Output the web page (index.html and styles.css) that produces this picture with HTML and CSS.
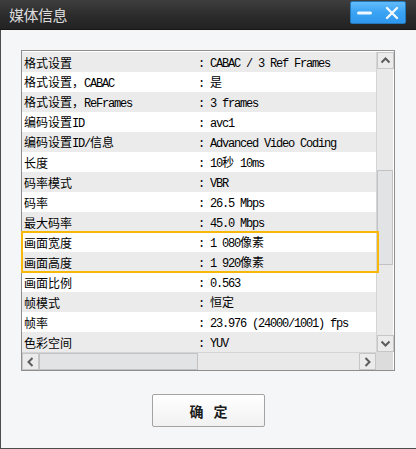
FILE: index.html
```html
<!DOCTYPE html>
<html lang="zh-CN">
<head>
  <meta charset="UTF-8">
  <title>媒体信息</title>
  <link rel="stylesheet" href="styles.css">
</head>
<body>
  <div class="window">
    <div class="titlebar">
      <span class="title">媒体信息</span>
      <div class="controls">
        <svg width="54" height="22" viewBox="0 0 54 22">
          <line x1="7.5" y1="11" x2="19.5" y2="11" stroke="#f2f8ff" stroke-width="3" stroke-linecap="round"/>
          <path d="M36 6 L46 16 M46 6 L36 16" stroke="#f2f8ff" stroke-width="2.4" stroke-linecap="round"/>
        </svg>
      </div>
    </div>

    <div class="content">
      <div class="list">
        <div class="rows">
          <div class="row alt"><span class="key">格式设置</span><span class="val"><span class="en">: CABAC / 3 Ref Frames</span></span></div>
          <div class="row"><span class="key">格式设置，<span class="en">CABAC</span></span><span class="val"><span class="en">: </span>是</span></div>
          <div class="row alt"><span class="key">格式设置，<span class="en">ReFrames</span></span><span class="val"><span class="en">: 3 frames</span></span></div>
          <div class="row"><span class="key">编码设置<span class="en">ID</span></span><span class="val"><span class="en">: avc1</span></span></div>
          <div class="row alt"><span class="key">编码设置<span class="en">ID/</span>信息</span><span class="val"><span class="en">: Advanced Video Coding</span></span></div>
          <div class="row"><span class="key">长度</span><span class="val"><span class="en">: 10</span>秒<span class="en"> 10ms</span></span></div>
          <div class="row alt"><span class="key">码率模式</span><span class="val"><span class="en">: VBR</span></span></div>
          <div class="row"><span class="key">码率</span><span class="val"><span class="en">: 26.5 Mbps</span></span></div>
          <div class="row alt"><span class="key">最大码率</span><span class="val"><span class="en">: 45.0 Mbps</span></span></div>
          <div class="hl">
            <div class="row"><span class="key">画面宽度</span><span class="val"><span class="en">: 1 080</span>像素</span></div>
            <div class="row alt"><span class="key">画面高度</span><span class="val"><span class="en">: 1 920</span>像素</span></div>
          </div>
          <div class="row"><span class="key">画面比例</span><span class="val"><span class="en">: 0.563</span></span></div>
          <div class="row alt"><span class="key">帧模式</span><span class="val"><span class="en">: </span>恒定</span></div>
          <div class="row"><span class="key">帧率</span><span class="val"><span class="en">: 23.976 (24000/1001) fps</span></span></div>
          <div class="row alt"><span class="key">色彩空间</span><span class="val"><span class="en">: YUV</span></span></div>
        </div>

        <div class="vscroll">
          <div class="arrow">
            <svg width="15" height="15" viewBox="0 0 15 15"><polyline points="3.5,9.5 7.5,5.5 11.5,9.5" fill="none" stroke="#5c5c5c" stroke-width="2"/></svg>
          </div>
          <div class="track track-v"><div class="thumb thumb-v"></div></div>
          <div class="arrow">
            <svg width="15" height="15" viewBox="0 0 15 15"><polyline points="3.5,5.5 7.5,9.5 11.5,5.5" fill="none" stroke="#5c5c5c" stroke-width="2"/></svg>
          </div>
        </div>

        <div class="hscroll">
          <div class="arrow">
            <svg width="15" height="16" viewBox="0 0 15 16"><polyline points="9.5,4 5.5,8 9.5,12" fill="none" stroke="#5c5c5c" stroke-width="2"/></svg>
          </div>
          <div class="track track-h"><div class="thumb thumb-h"></div></div>
          <div class="arrow">
            <svg width="15" height="16" viewBox="0 0 15 16"><polyline points="5.5,4 9.5,8 5.5,12" fill="none" stroke="#5c5c5c" stroke-width="2"/></svg>
          </div>
        </div>
        <div class="corner"></div>
      </div>

      <div class="actions">
        <button class="ok">确定</button>
      </div>
    </div>
  </div>
</body>
</html>
```

FILE: styles.css
```css
* {
  box-sizing: border-box;
}

body {
  margin: 0;
  font-family: "Noto Sans CJK SC", "DejaVu Sans", sans-serif;
  background: #f5f6f8;
  color: #000;
}

.window {
  width: 416px;
  height: 449px;
  background: #f5f6f8;
  border-left: 1px solid #4c4c4c;
  border-bottom: 1px solid #4c4c4c;
}

/* title bar */
.titlebar {
  height: 30px;
  display: flex;
  justify-content: space-between;
  align-items: flex-start;
  padding: 0 10px 0 9px;
  background: linear-gradient(to bottom, #3e3e3e, #2a2a2a 60%, #232323);
  border-bottom: 1px solid #161616;
  margin-left: -1px;
}

.title {
  font-size: 15px;
  line-height: 29px;
  color: #dcdcdc;
  letter-spacing: -0.5px;
}

.controls {
  margin-top: 1px;
  width: 56px;
  height: 23px;
  border: 1px solid #2479bb;
  border-radius: 2px;
  background: linear-gradient(to bottom, #62bcfb, #3aa3f3 50%, #2f98ee);
}

.controls svg {
  display: block;
}

/* list */
.content {
  padding: 20px 0 0 20px;
}

.list {
  width: 374px;
  display: grid;
  grid-template-columns: 354px 17px;
  grid-template-rows: 300px 18px;
  border: 1px solid #8e8e8e;
  padding: 1px 1px 0 0;
  background: #fff;
}

.rows {
  position: relative;
}

.row {
  display: flex;
  height: 20px;
  align-items: center;
  font-size: 12px;
  white-space: nowrap;
  background: #fff;
}

.row.alt {
  background: #ebebeb;
}

.key {
  width: 176px;
  padding-left: 2px;
}

.en {
  font-family: "Liberation Mono", monospace;
  font-size: 12px;
  letter-spacing: -1.2px;
}

.hl {
  position: relative;
  z-index: 1;
  outline: 2px solid #f7b80a;
  outline-offset: -1px;
  margin-right: -2px;
}

.hl .row {
  margin-right: 2px;
}

/* scroll bars */
.vscroll {
  display: flex;
  flex-direction: column;
  background: #e9e9e9;
  border-left: 1px solid #d4d4d4;
}

.hscroll {
  display: flex;
  background: #e9e9e9;
  border-top: 1px solid #d4d4d4;
}

.arrow {
  width: 17px;
  height: 17px;
  display: flex;
  align-items: center;
  justify-content: center;
  background: #ebebeb;
  border: 1px solid #c6c6c6;
}

.hscroll .arrow {
  height: 17px;
}

.track {
  flex: 1;
  display: flex;
}

.track-v {
  flex-direction: column;
}

.thumb {
  background: #e1e3e5;
  border: 1px solid #c2c2c2;
}

.thumb-v {
  margin-top: 101px;
  height: 95px;
}

.thumb-h {
  width: 159px;
}

.corner {
  background: #dcdcdc;
}

/* button */
.actions {
  padding: 23px 0 0 131px;
}

.ok {
  width: 113px;
  height: 33px;
  border: 1px solid #a3a3a3;
  border-radius: 2px;
  background: linear-gradient(to bottom, #ffffff, #f1f1f1);
  font-family: "Noto Sans CJK SC", sans-serif;
  font-size: 14px;
  font-weight: 700;
  color: #1c1c1c;
  letter-spacing: 10px;
  padding: 0 0 0 10px;
}
```
